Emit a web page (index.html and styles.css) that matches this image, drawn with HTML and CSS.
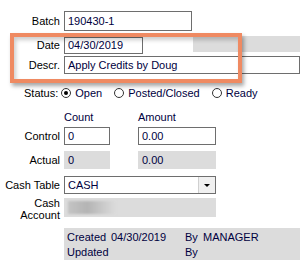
FILE: index.html
```html
<!DOCTYPE html>
<html lang="en">
<head>
    <meta charset="UTF-8">
    <meta name="viewport" content="width=device-width, initial-scale=1.0">
    <title>Batch</title>
    <link rel="stylesheet" href="styles.css">
</head>
<body>
<div class="form">
    <div class="row row-batch">
        <span class="label">Batch</span>
        <div class="field batch-field">190430-1</div>
    </div>
    <div class="row row-date">
        <span class="label">Date</span>
        <div class="field date-field">04/30/2019</div>
        <div class="gray date-gray"></div>
    </div>
    <div class="row row-descr">
        <span class="label">Descr.</span>
        <div class="field descr-field">Apply Credits by Doug</div>
    </div>
    <div class="row row-status">
        <span class="label">Status:</span>
        <span class="radio checked"></span><span class="radio-text">Open</span>
        <span class="radio"></span><span class="radio-text">Posted/Closed</span>
        <span class="radio"></span><span class="radio-text">Ready</span>
    </div>
    <div class="row row-heads">
        <span class="label"></span>
        <span class="head count-col">Count</span>
        <span class="head amount-col">Amount</span>
    </div>
    <div class="row row-control">
        <span class="label">Control</span>
        <div class="field count-col">0</div>
        <div class="field amount-col">0.00</div>
    </div>
    <div class="row row-actual">
        <span class="label">Actual</span>
        <div class="gray count-col">0</div>
        <div class="gray amount-col">0.00</div>
    </div>
    <div class="row row-cash">
        <span class="label">Cash Table</span>
        <div class="field select-field">CASH<span class="drop"><span class="arrow"></span></span></div>
    </div>
    <div class="row row-account">
        <span class="label label-two">Cash<br>Account</span>
        <div class="gray account-field"><span class="blur"></span></div>
    </div>
    <div class="row row-audit">
        <span class="label"></span>
        <div class="gray audit">
            <div class="audit-line"><span class="a-key">Created</span><span class="a-val">04/30/2019</span><span class="a-by">By</span><span>MANAGER</span></div>
            <div class="audit-line"><span class="a-key">Updated</span><span class="a-val"></span><span class="a-by">By</span><span></span></div>
        </div>
    </div>
    <div class="highlight"></div>
</div>
</body>
</html>
```

FILE: styles.css
```css
body {
    margin: 0;
    background: #fff;
    font-family: "Liberation Sans", Arial, sans-serif;
    font-size: 11px;
    color: #000;
}
.form {
    position: relative;
    padding-top: 11px;
    width: 307px;
    height: 271px;
    box-sizing: border-box;
}
.row {
    display: flex;
    align-items: center;
}
.label {
    width: 60px;
    margin-right: 4px;
    text-align: right;
    flex-shrink: 0;
    color: #000;
}
.field, .gray {
    box-sizing: border-box;
    height: 18px;
    line-height: 16px;
    padding: 0 3px;
    white-space: nowrap;
    overflow: hidden;
}
.field {
    border: 1px solid #6e6e6e;
    background: #fff;
    color: #000040;
}
.gray {
    background: #dcdcdc;
    border: 1px solid #dcdcdc;
    color: #000040;
}
.batch-field {
    width: 128px;
    height: 20px;
    line-height: 18px;
}
.row-date {
    margin-top: 6px;
    align-items: flex-start;
}
.date-field {
    width: 79px;
    height: 17px;
    line-height: 15px;
}
.date-gray {
    width: 107px;
    height: 16px;
    margin-left: 50px;
    margin-top: -1px;
}
.row-date .label {
    line-height: 17px;
}
.row-descr {
    margin-top: 2px;
}
.descr-field {
    width: 236px;
}
.row-status {
    margin-top: 11px;
    height: 16px;
}
.row-status .label {
    width: auto;
    margin-left: 24px;
    margin-right: 3px;
}
.radio {
    width: 10px;
    height: 10px;
    border: 1px solid #333;
    border-radius: 50%;
    box-sizing: border-box;
    position: relative;
    margin-right: 4px;
    background: #fff;
}
.radio.checked::after {
    content: "";
    position: absolute;
    left: 2px;
    top: 2px;
    width: 4px;
    height: 4px;
    border-radius: 50%;
    background: #000;
}
.radio-text {
    margin-right: 12px;
    color: #000040;
}
.row-heads {
    margin-top: 9px;
    height: 14px;
}
.head {
    color: #000040;
}
.count-col {
    width: 46px;
    flex-shrink: 0;
}
.amount-col {
    width: 78px;
    margin-left: 28px;
    flex-shrink: 0;
}
.head.count-col, .head.amount-col {
    padding-left: 0;
}
.row-control {
    margin-top: 3px;
}
.row-actual {
    margin-top: 6px;
}
.row-cash {
    margin-top: 7px;
}
.select-field {
    width: 152px;
    position: relative;
}
.drop {
    position: absolute;
    right: 0;
    top: 0;
    width: 16px;
    height: 16px;
    background: #f0f0f0;
    border-left: 1px solid #d0d0d0;
    display: flex;
    align-items: center;
    justify-content: center;
}
.arrow {
    width: 0;
    height: 0;
    border-left: 3px solid transparent;
    border-right: 3px solid transparent;
    border-top: 3px solid #000;
}
.row-account {
    margin-top: 4px;
    align-items: flex-start;
}
.label-two {
    line-height: 12px;
    margin-top: -1px;
}
.account-field {
    width: 152px;
    height: 19px;
    padding: 2px 3px;
}
.blur {
    display: block;
    width: 48px;
    height: 13px;
    background: linear-gradient(to right, #c4c4c4 0%, #b4b4b4 40%, #c8c8c8 70%, #dcdcdc 100%);
    filter: blur(1px);
}
.row-audit {
    margin-top: 7px;
}
.audit {
    width: 236px;
    height: 32px;
    padding: 1px 2px;
    line-height: 15px;
}
.audit-line {
    display: flex;
}
.a-key {
    width: 44px;
}
.a-val {
    width: 74px;
}
.a-by {
    width: 18px;
}
.highlight {
    position: absolute;
    left: 10px;
    top: 33px;
    width: 232px;
    height: 50px;
    box-sizing: border-box;
    border: 4px solid #ef8a62;
    box-shadow: 2px 3px 4px rgba(0, 0, 0, 0.35), inset 2px 3px 4px rgba(0, 0, 0, 0.2);
}
```
